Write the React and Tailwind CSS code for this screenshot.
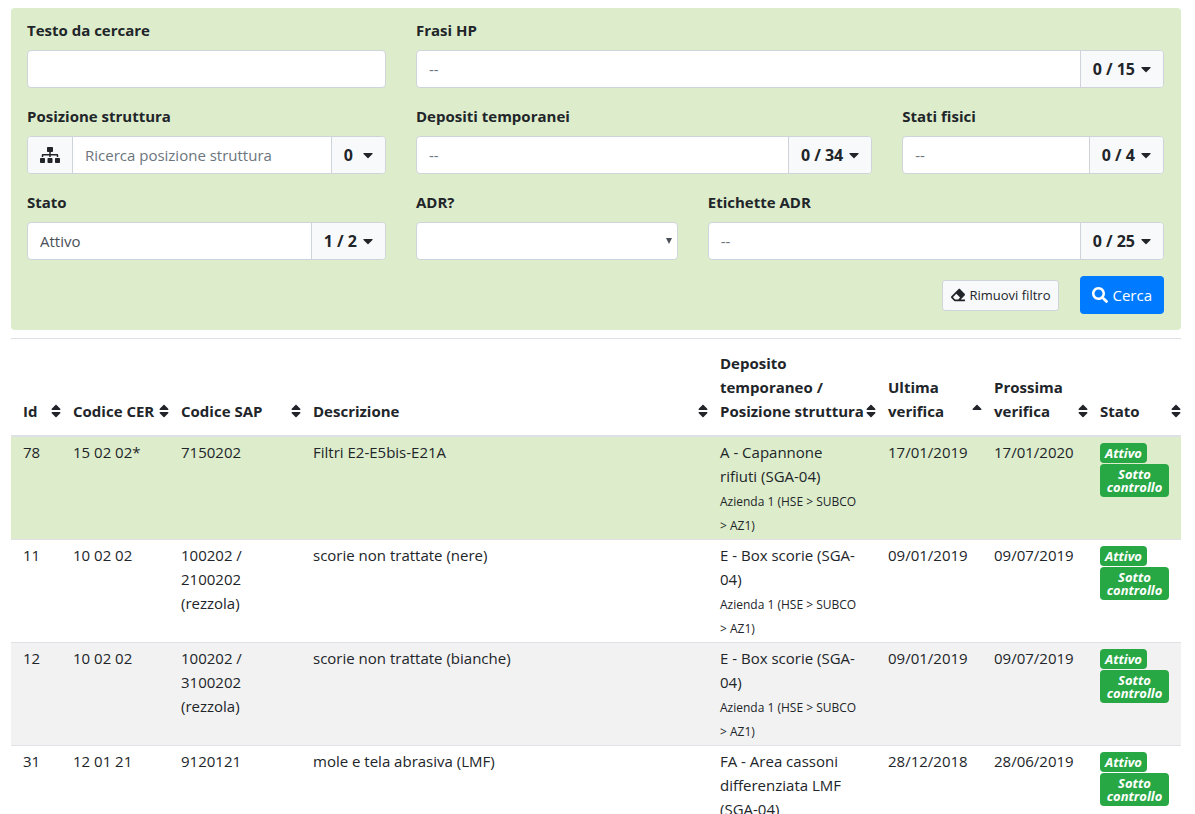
import React from "react";
import {
  FaCaretDown,
  FaEraser,
  FaSearch,
  FaSitemap,
  FaSort,
  FaSortUp,
} from "react-icons/fa";

const rows = [
  {
    id: "78",
    cer: "15 02 02*",
    sap: "7150202",
    description: "Filtri E2-E5bis-E21A",
    deposit: "A - Capannone rifiuti (SGA-04)",
    last: "17/01/2019",
    next: "17/01/2020",
    tone: "bg-[#ddedcc]",
  },
  {
    id: "11",
    cer: "10 02 02",
    sap: "100202 / 2100202 (rezzola)",
    description: "scorie non trattate (nere)",
    deposit: "E - Box scorie (SGA-04)",
    last: "09/01/2019",
    next: "09/07/2019",
    tone: "bg-white",
  },
  {
    id: "12",
    cer: "10 02 02",
    sap: "100202 / 3100202 (rezzola)",
    description: "scorie non trattate (bianche)",
    deposit: "E - Box scorie (SGA-04)",
    last: "09/01/2019",
    next: "09/07/2019",
    tone: "bg-[#f2f2f2]",
  },
  {
    id: "31",
    cer: "12 01 21",
    sap: "9120121",
    description: "mole e tela abrasiva (LMF)",
    deposit: "FA - Area cassoni differenziata LMF (SGA-04)",
    last: "28/12/2018",
    next: "28/06/2019",
    tone: "bg-white",
  },
];

const columns = [
  { label: "Id", width: "w-[50px]" },
  { label: "Codice CER", width: "w-[108px]" },
  { label: "Codice SAP", width: "w-[132px]" },
  { label: "Descrizione", width: "w-auto" },
  { label: "Deposito temporaneo / Posizione struttura", width: "w-[168px]" },
  { label: "Ultima verifica", width: "w-[106px]", sorted: true },
  { label: "Prossima verifica", width: "w-[106px]" },
  { label: "Stato", width: "w-[93px]" },
];

function Field({ id, label, span, children }) {
  return (
    <div className={`min-w-0 ${span}`}>
      <label htmlFor={id} className="mb-2 block leading-6 font-bold">
        {label}
      </label>
      {children}
    </div>
  );
}

function PickerField({ id, label, span, value, placeholder, count, gap = "gap-[6px]", tree }) {
  return (
    <Field id={id} label={label} span={span}>
      <div className="flex h-[38px] overflow-hidden rounded border border-[#ced4da] bg-white">
        {tree && (
          <button
            type="button"
            aria-label="Apri struttura"
            className="flex items-center border-r border-[#ced4da] bg-[#f8f9fa] px-3"
          >
            <FaSitemap className="h-4 w-5" />
          </button>
        )}
        <input
          id={id}
          type="text"
          defaultValue={value}
          placeholder={placeholder}
          className="min-w-0 flex-1 px-3 text-[#495057] outline-none placeholder:text-[#6c757d]"
        />
        <button
          type="button"
          className={`flex items-center border-l border-[#ced4da] bg-[#f8f9fa] px-3 text-base font-bold whitespace-nowrap ${gap}`}
        >
          {count}
          <FaCaretDown className="h-4 w-[10px]" />
        </button>
      </div>
    </Field>
  );
}

function Badge({ children }) {
  return (
    <span className="inline-block rounded bg-[#28a745] px-[5px] pt-1 pb-[3px] text-center text-[13px] leading-[13px] font-bold text-white italic">
      {children}
    </span>
  );
}

export default function App() {
  return (
    <main className="h-screen overflow-y-auto bg-white pt-2 pr-[14px] pl-[11px] font-['Open_Sans','Noto_Sans',sans-serif] text-[15px] leading-6 text-[#212529] [scrollbar-width:none]">
      <form
        className="rounded bg-[#ddedcc] pt-[10px] pr-[17px] pb-4 pl-4"
        onSubmit={(event) => event.preventDefault()}
      >
        <div className="grid grid-cols-12 gap-x-[30px] gap-y-4">
          <Field id="testo" label="Testo da cercare" span="col-span-4">
            <input
              id="testo"
              type="text"
              className="h-[38px] w-full rounded border border-[#ced4da] bg-white px-3 text-[#495057] outline-none"
            />
          </Field>
          <PickerField id="frasi" label="Frasi HP" span="col-span-8" placeholder="--" count="0 / 15" />
          <PickerField
            id="posizione"
            label="Posizione struttura"
            span="col-span-4"
            placeholder="Ricerca posizione struttura"
            count="0"
            gap="gap-[10px]"
            tree
          />
          <PickerField id="depositi" label="Depositi temporanei" span="col-span-5" placeholder="--" count="0 / 34" />
          <PickerField id="stati" label="Stati fisici" span="col-span-3" placeholder="--" count="0 / 4" />
          <PickerField id="stato" label="Stato" span="col-span-4" value="Attivo" count="1 / 2" />
          <Field id="adr" label="ADR?" span="col-span-3">
            <div className="relative">
              <select
                id="adr"
                defaultValue=""
                className="h-[38px] w-full appearance-none rounded border border-[#ced4da] bg-white px-3 text-[#495057] outline-none"
              >
                <option value=""></option>
                <option value="si">Sì</option>
                <option value="no">No</option>
              </select>
              <svg
                viewBox="0 0 6 6"
                className="pointer-events-none absolute top-4 right-[6px] h-[6px] w-[6px] fill-[#495057]"
                aria-hidden="true"
              >
                <path d="M0 0h6L3 6z" />
              </svg>
            </div>
          </Field>
          <PickerField id="etichette" label="Etichette ADR" span="col-span-5" placeholder="--" count="0 / 25" />
        </div>
        <div className="mt-4 flex items-center justify-end gap-[21px]">
          <button
            type="reset"
            className="flex h-[31px] items-center gap-1 rounded-[3px] border border-[#ced4da] bg-[#f8f9fa] px-2 text-[13px]"
          >
            <FaEraser className="size-[14px]" />
            Rimuovi filtro
          </button>
          <button
            type="submit"
            className="flex h-[38px] items-center gap-1 rounded bg-[#007bff] px-3 text-white"
          >
            <FaSearch className="size-4" />
            Cerca
          </button>
        </div>
      </form>

      <table className="mt-2 w-full table-fixed border-separate border-spacing-0 text-left">
        <thead>
          <tr>
            {columns.map((column) => (
              <th
                key={column.label}
                scope="col"
                aria-sort={column.sorted ? "ascending" : undefined}
                className={`border-t border-b-2 border-[#dee2e6] py-3 pr-0 pl-3 align-bottom font-bold ${column.width}`}
              >
                <div className="flex items-end justify-between">
                  <span>{column.label}</span>
                  <span className="flex h-6 shrink-0 items-center">
                    {column.sorted ? (
                      <FaSortUp className="h-4 w-[10px]" />
                    ) : (
                      <FaSort className="h-4 w-[10px]" />
                    )}
                  </span>
                </div>
              </th>
            ))}
          </tr>
        </thead>
        <tbody>
          {rows.map((row) => (
            <tr
              key={row.id}
              className={`align-top *:border-b *:border-[#dee2e6] *:pt-[3px] *:pb-px *:pl-3 ${row.tone}`}
            >
              <td className="pr-3">{row.id}</td>
              <td className="pr-3">{row.cer}</td>
              <td className="pr-3">{row.sap}</td>
              <td className="pr-3">{row.description}</td>
              <td className="pr-4">
                {row.deposit}
                <small className="mt-[2px] block text-[12px] leading-6">Azienda 1 (HSE &gt; SUBCO &gt; AZ1)</small>
              </td>
              <td className="pr-3">{row.last}</td>
              <td className="pr-3">{row.next}</td>
              <td className="pr-3">
                <div className="flex flex-col items-start gap-px pt-[3px]">
                  <Badge>Attivo</Badge>
                  <Badge>Sotto controllo</Badge>
                </div>
              </td>
            </tr>
          ))}
        </tbody>
      </table>
    </main>
  );
}
